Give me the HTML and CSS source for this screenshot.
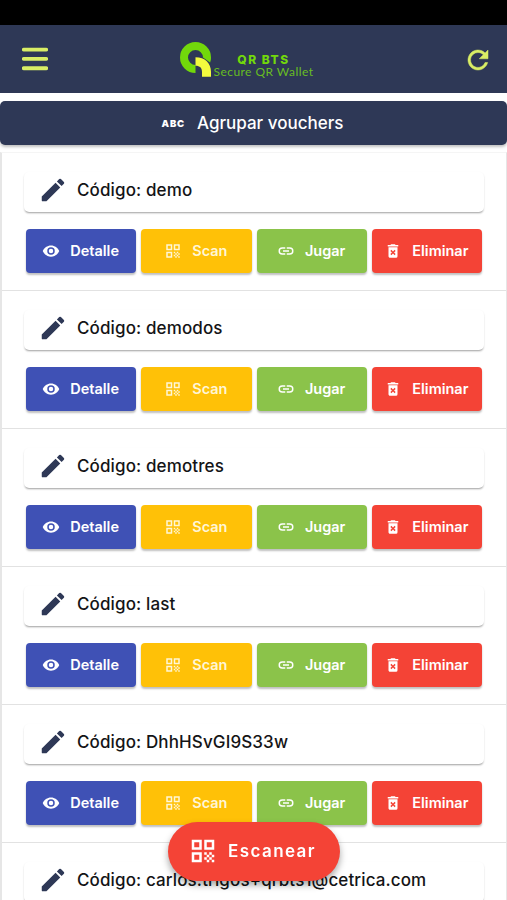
FILE: index.html
```html
<!DOCTYPE html>
<html lang="es">
<head>
    <meta charset="utf-8">
    <title>QR BTS</title>
    <link rel="stylesheet" href="styles.css">
</head>
<body>

<svg class="sprite">
    <symbol id="edit" viewBox="0 0 24 24">
        <path d="M3 17.25V20.3c0 .4.3.7.7.7h3.05L17.81 9.94l-3.75-3.75L3 17.25zM20.71 7.04c.39-.39.39-1.02 0-1.41l-2.34-2.34a1 1 0 0 0-1.41 0l-1.83 1.83 3.75 3.75 1.83-1.83z"/>
    </symbol>
    <symbol id="eye" viewBox="0 0 24 24">
        <path d="M12 4.5C7 4.5 2.73 7.61 1 12c1.73 4.39 6 7.5 11 7.5s9.27-3.11 11-7.5c-1.73-4.39-6-7.5-11-7.5zM12 17a5 5 0 1 1 0-10 5 5 0 0 1 0 10zm0-8a3 3 0 1 0 0 6 3 3 0 0 0 0-6z"/>
    </symbol>
    <symbol id="qr" viewBox="0 0 24 24">
        <path fill-rule="evenodd" d="M3 11h8V3H3zm2-6h4v4H5zM3 21h8v-8H3zm2-6h4v4H5zM13 3v8h8V3zm6 6h-4V5h4z"/>
        <path d="M19 19h2v2h-2zM13 13h2v2h-2zM15 15h2v2h-2zM13 17h2v2h-2zM15 19h2v2h-2zM17 17h2v2h-2zM17 13h2v2h-2zM19 15h2v2h-2z"/>
    </symbol>
    <symbol id="link" viewBox="0 0 24 24">
        <path d="M3.9 12A3.1 3.1 0 0 1 7 8.9h4V7H7a5 5 0 0 0 0 10h4v-1.9H7A3.1 3.1 0 0 1 3.9 12zM8 13h8v-2H8zm9-6h-4v1.9h4a3.1 3.1 0 0 1 0 6.2h-4V17h4a5 5 0 0 0 0-10z"/>
    </symbol>
    <symbol id="trash" viewBox="0 0 24 24">
        <path d="M6 19c0 1.1.9 2 2 2h8a2 2 0 0 0 2-2V7H6zm2.46-7.12 1.41-1.41L12 12.59l2.12-2.12 1.41 1.41L13.41 14l2.12 2.12-1.41 1.41L12 15.41l-2.12 2.12-1.41-1.41L10.59 14zM15.5 4l-1-1h-5l-1 1H5v2h14V4z"/>
    </symbol>
</svg>

<div class="status-bar"></div>

<header class="header">
    <svg class="menu" viewBox="0 0 26 24">
        <path d="M1.8 2.6h22.4M1.8 11.9h22.4M1.8 21.2h22.4"/>
    </svg>
    <div class="brand">
        <svg class="logo" viewBox="0 0 32 36">
            <path fill="#72d80b" d="M15.5 0A15.5 15.5 0 0 1 31 15.5c0 2-.3 3.5-.9 5L23 15.5A7.5 7.5 0 1 0 15.5 23v8A15.5 15.5 0 0 1 15.5 0z"/>
            <path fill="#f3fb3e" d="M15.5 15.2C25 15.2 31 21 31 30v4.7h-9V30c0-4-2-6.2-6.5-6.2z"/>
        </svg>
        <div class="brand-text">
            <span class="brand-name">QR BTS</span>
            <span class="brand-sub">Secure QR Wallet</span>
        </div>
    </div>
    <svg class="refresh" viewBox="0 0 24 24">
        <path d="M17.65 6.35A8 8 0 1 0 19.73 14h-2.08A6 6 0 1 1 12 6c1.66 0 3.14.69 4.22 1.78L13 11h7V4z"/>
    </svg>
</header>

<button class="group-btn"><span class="abc">ABC</span>Agrupar vouchers</button>

<main class="list">
    <div class="voucher">
        <div class="code"><svg><use href="#edit"/></svg>Código: demo</div>
        <div class="actions">
            <button class="btn detail"><svg><use href="#eye"/></svg>Detalle</button>
            <button class="btn scan"><svg><use href="#qr"/></svg>Scan</button>
            <button class="btn play"><svg><use href="#link"/></svg>Jugar</button>
            <button class="btn delete"><svg><use href="#trash"/></svg>Eliminar</button>
        </div>
    </div>
    <div class="voucher">
        <div class="code"><svg><use href="#edit"/></svg>Código: demodos</div>
        <div class="actions">
            <button class="btn detail"><svg><use href="#eye"/></svg>Detalle</button>
            <button class="btn scan"><svg><use href="#qr"/></svg>Scan</button>
            <button class="btn play"><svg><use href="#link"/></svg>Jugar</button>
            <button class="btn delete"><svg><use href="#trash"/></svg>Eliminar</button>
        </div>
    </div>
    <div class="voucher">
        <div class="code"><svg><use href="#edit"/></svg>Código: demotres</div>
        <div class="actions">
            <button class="btn detail"><svg><use href="#eye"/></svg>Detalle</button>
            <button class="btn scan"><svg><use href="#qr"/></svg>Scan</button>
            <button class="btn play"><svg><use href="#link"/></svg>Jugar</button>
            <button class="btn delete"><svg><use href="#trash"/></svg>Eliminar</button>
        </div>
    </div>
    <div class="voucher">
        <div class="code"><svg><use href="#edit"/></svg>Código: last</div>
        <div class="actions">
            <button class="btn detail"><svg><use href="#eye"/></svg>Detalle</button>
            <button class="btn scan"><svg><use href="#qr"/></svg>Scan</button>
            <button class="btn play"><svg><use href="#link"/></svg>Jugar</button>
            <button class="btn delete"><svg><use href="#trash"/></svg>Eliminar</button>
        </div>
    </div>
    <div class="voucher">
        <div class="code"><svg><use href="#edit"/></svg>Código: DhhHSvGI9S33w</div>
        <div class="actions">
            <button class="btn detail"><svg><use href="#eye"/></svg>Detalle</button>
            <button class="btn scan"><svg><use href="#qr"/></svg>Scan</button>
            <button class="btn play"><svg><use href="#link"/></svg>Jugar</button>
            <button class="btn delete"><svg><use href="#trash"/></svg>Eliminar</button>
        </div>
    </div>
    <div class="voucher">
        <div class="code"><svg><use href="#edit"/></svg>Código: carlos.trigos+qrbts1@cetrica.com</div>
    </div>
</main>

<button class="fab"><svg><use href="#qr"/></svg>Escanear</button>

</body>
</html>
```

FILE: styles.css
```css
* {
    box-sizing: border-box;
}

body {
    margin: 0;
    height: 900px;
    overflow: hidden;
    display: flex;
    flex-direction: column;
    background: #fff;
    font-family: Inter, Roboto, sans-serif;
}

button {
    border: none;
    padding: 0;
    font-family: inherit;
    color: #fff;
    cursor: pointer;
}

svg {
    fill: currentColor;
    flex: none;
}

.sprite {
    display: none;
}

.status-bar {
    flex: none;
    height: 25px;
    background: #000;
}

.header {
    flex: none;
    height: 68px;
    padding: 0 14px 0 22px;
    display: flex;
    align-items: center;
    justify-content: space-between;
    background: #2e3856;
    color: #d9ee65;
}

.menu {
    width: 26px;
    height: 24px;
    stroke: currentColor;
    stroke-width: 3.9;
    stroke-linecap: round;
}

.refresh {
    width: 30px;
    height: 30px;
    margin-top: 1px;
    stroke: currentColor;
    stroke-width: 0.4;
}

.brand {
    display: flex;
    gap: 2px;
    align-items: flex-end;
    margin: 2px 18px 0 0;
}

.logo {
    width: 32px;
    height: 36px;
}

.brand-text {
    display: flex;
    flex-direction: column;
    align-items: center;
    white-space: nowrap;
    color: #72d80b;
}

.brand-name {
    font-size: 12px;
    line-height: 12px;
    font-weight: 800;
    letter-spacing: 1.5px;
}

.brand-sub {
    font-family: Lato, sans-serif;
    font-size: 12px;
    line-height: 12px;
    font-weight: 400;
    letter-spacing: 0.45px;
    color: #68bd22;
}

.group-btn {
    flex: none;
    height: 44px;
    margin-top: 8px;
    padding-right: 2px;
    display: flex;
    align-items: center;
    justify-content: center;
    gap: 12px;
    border-radius: 5px;
    background: #2e3856;
    box-shadow: 0 2px 3px rgba(0, 0, 0, 0.25);
    font-size: 17px;
    font-weight: 500;
}

.abc {
    font-size: 9.5px;
    font-weight: 900;
    letter-spacing: 0.8px;
}

.list {
    flex: 1;
    min-height: 0;
    overflow: hidden;
    margin-top: 7px;
    border: 1px solid #e6e6e6;
    border-left-width: 2px;
    border-top-color: #f5f5f5;
    border-bottom: none;
}

.voucher {
    height: 138px;
    padding: 19px 22px 0;
    border-bottom: 1px solid #e2e2e2;
}

.voucher:last-child {
    height: auto;
    border-bottom: none;
}

.code {
    height: 40px;
    padding: 0 0 5px 14px;
    display: flex;
    align-items: center;
    gap: 9px;
    border-radius: 5px;
    box-shadow: 0 2px 2px -1px rgba(0, 0, 0, 0.3), 0 1px 3px -1px rgba(0, 0, 0, 0.2);
    font-size: 17px;
    font-weight: 500;
    letter-spacing: 0.12px;
    color: #141416;
}

.code svg {
    width: 30px;
    height: 30px;
    color: #2e3856;
}

.actions {
    margin: 17px 2px 0;
    display: grid;
    grid-template-columns: repeat(4, 1fr);
    gap: 5px;
}

.btn {
    height: 44px;
    padding: 0 1px 1px 0;
    display: flex;
    align-items: center;
    justify-content: center;
    gap: 10px;
    border-radius: 4px;
    box-shadow: 0 2px 2px rgba(0, 0, 0, 0.25);
    font-size: 14.5px;
    font-weight: 600;
}

.btn svg {
    width: 18px;
    height: 18px;
}

.detail {
    background: #3f51b5;
}

.scan {
    background: #ffc107;
    color: #fff6d6;
}

.play {
    background: #8bc34a;
}

.delete {
    background: #f44336;
}

.fab {
    position: fixed;
    left: 168px;
    top: 822px;
    width: 172px;
    height: 59px;
    padding: 0 4px 1px 0;
    display: flex;
    align-items: center;
    justify-content: center;
    gap: 10px;
    border-radius: 30px;
    background: #f44336;
    box-shadow: 0 4px 7px rgba(0, 0, 0, 0.35);
    font-size: 17px;
    font-weight: 600;
    letter-spacing: 1.4px;
}

.fab svg {
    width: 30px;
    height: 30px;
}
```
